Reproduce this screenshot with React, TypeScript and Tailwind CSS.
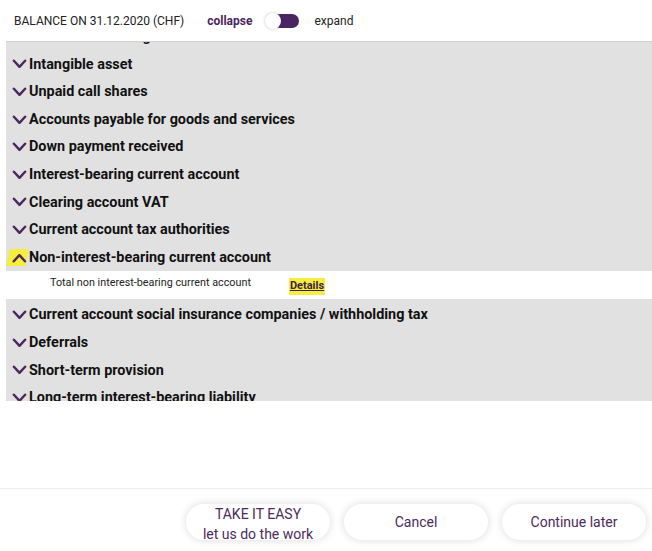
import { useState } from "react";

const before = [
  "Intangible asset",
  "Unpaid call shares",
  "Accounts payable for goods and services",
  "Down payment received",
  "Interest-bearing current account",
  "Clearing account VAT",
  "Current account tax authorities",
];

const after = [
  "Current account social insurance companies / withholding tax",
  "Deferrals",
  "Short-term provision",
  "Long-term interest-bearing liability",
];

function Chevron({ up = false }: { up?: boolean }) {
  return (
    <svg
      viewBox="0 0 16 10"
      className="h-[10px] w-[15px] shrink-0"
      fill="none"
      stroke="#4b2660"
      strokeWidth={2.6}
      strokeLinecap="round"
      strokeLinejoin="round"
    >
      {up ? <path d="M2 8.5 8 2l6 6.5" /> : <path d="M2 1.5 8 8l6-6.5" />}
    </svg>
  );
}

function Row({ label }: { label: string }) {
  return (
    <div className="flex h-[27.6px] items-center gap-[2px] pl-[6px] text-[14.4px] font-bold text-[#111]">
      <Chevron />
      <span>{label}</span>
    </div>
  );
}

export default function App() {
  const [expanded, setExpanded] = useState(true);

  return (
    <div className="flex h-[551px] w-[652px] flex-col bg-white font-['Roboto',sans-serif]">
      <div className="flex h-[41px] items-center pl-[14px] text-[12px] text-[#222]">
        <span>BALANCE ON 31.12.2020 (CHF)</span>
        <span className="ml-[23px] font-bold text-[#4b2660]">collapse</span>
        <button
          onClick={() => setExpanded(!expanded)}
          className="relative ml-[13px] h-[16px] w-[34px]"
        >
          <span className="absolute right-0 top-[1px] h-[14px] w-[26px] rounded-full bg-[#4b2466]" />
          <span className="absolute left-0 top-0 h-[16px] w-[16px] rounded-full bg-white shadow-[0_0_3px_rgba(0,0,0,0.25)]" />
        </button>
        <span className="ml-[15px]">expand</span>
      </div>

      <div className="ml-[6px] h-[360px] overflow-hidden border-t border-[#d0d0d0] bg-[#e1e1e1]">
        <div className="-mt-[19px]">
          <Row label="Immaterial holdings" />
          {before.map((l) => (
            <Row key={l} label={l} />
          ))}
          <div className="flex h-[27.6px] items-center gap-[2px] pl-[6px] text-[14.4px] font-bold text-[#111]">
            <span className="-ml-[4px] flex h-[17px] -skew-x-12 items-center bg-[#f5ee3a] pl-[4px]">
              <span className="skew-x-12">
                <Chevron up />
              </span>
            </span>
            <span>Non-interest-bearing current account</span>
          </div>
          <div className="flex h-[28px] items-start bg-white pt-[4px] text-[10.8px] text-[#222]">
            <span className="pl-[44px]">Total non interest-bearing current account</span>
            <span className="ml-[38px] mt-[3px] bg-[#f5ee3a] px-[1px] text-[11px] font-bold text-[#3d1e50] underline">
              Details
            </span>
          </div>
          <div className="pt-[2px]">
            {after.map((l) => (
              <Row key={l} label={l} />
            ))}
          </div>
        </div>
      </div>

      <div className="flex-1" />

      <div className="flex h-[63px] items-start justify-end gap-[14px] border-t border-[#ececec] pr-[6px] pt-[15px] text-[14px] text-[#4b2a5e]">
        <button className="flex h-[36px] w-[144px] flex-col items-center justify-start overflow-hidden rounded-full bg-white leading-[20px] shadow-[0_0_8px_rgba(0,0,0,0.15)]">
          <span>TAKE IT EASY</span>
          <span>let us do the work</span>
        </button>
        <button className="h-[36px] w-[144px] rounded-full bg-white shadow-[0_0_8px_rgba(0,0,0,0.15)]">
          Cancel
        </button>
        <button className="h-[36px] w-[144px] rounded-full bg-white shadow-[0_0_8px_rgba(0,0,0,0.15)]">
          Continue later
        </button>
      </div>
    </div>
  );
}
